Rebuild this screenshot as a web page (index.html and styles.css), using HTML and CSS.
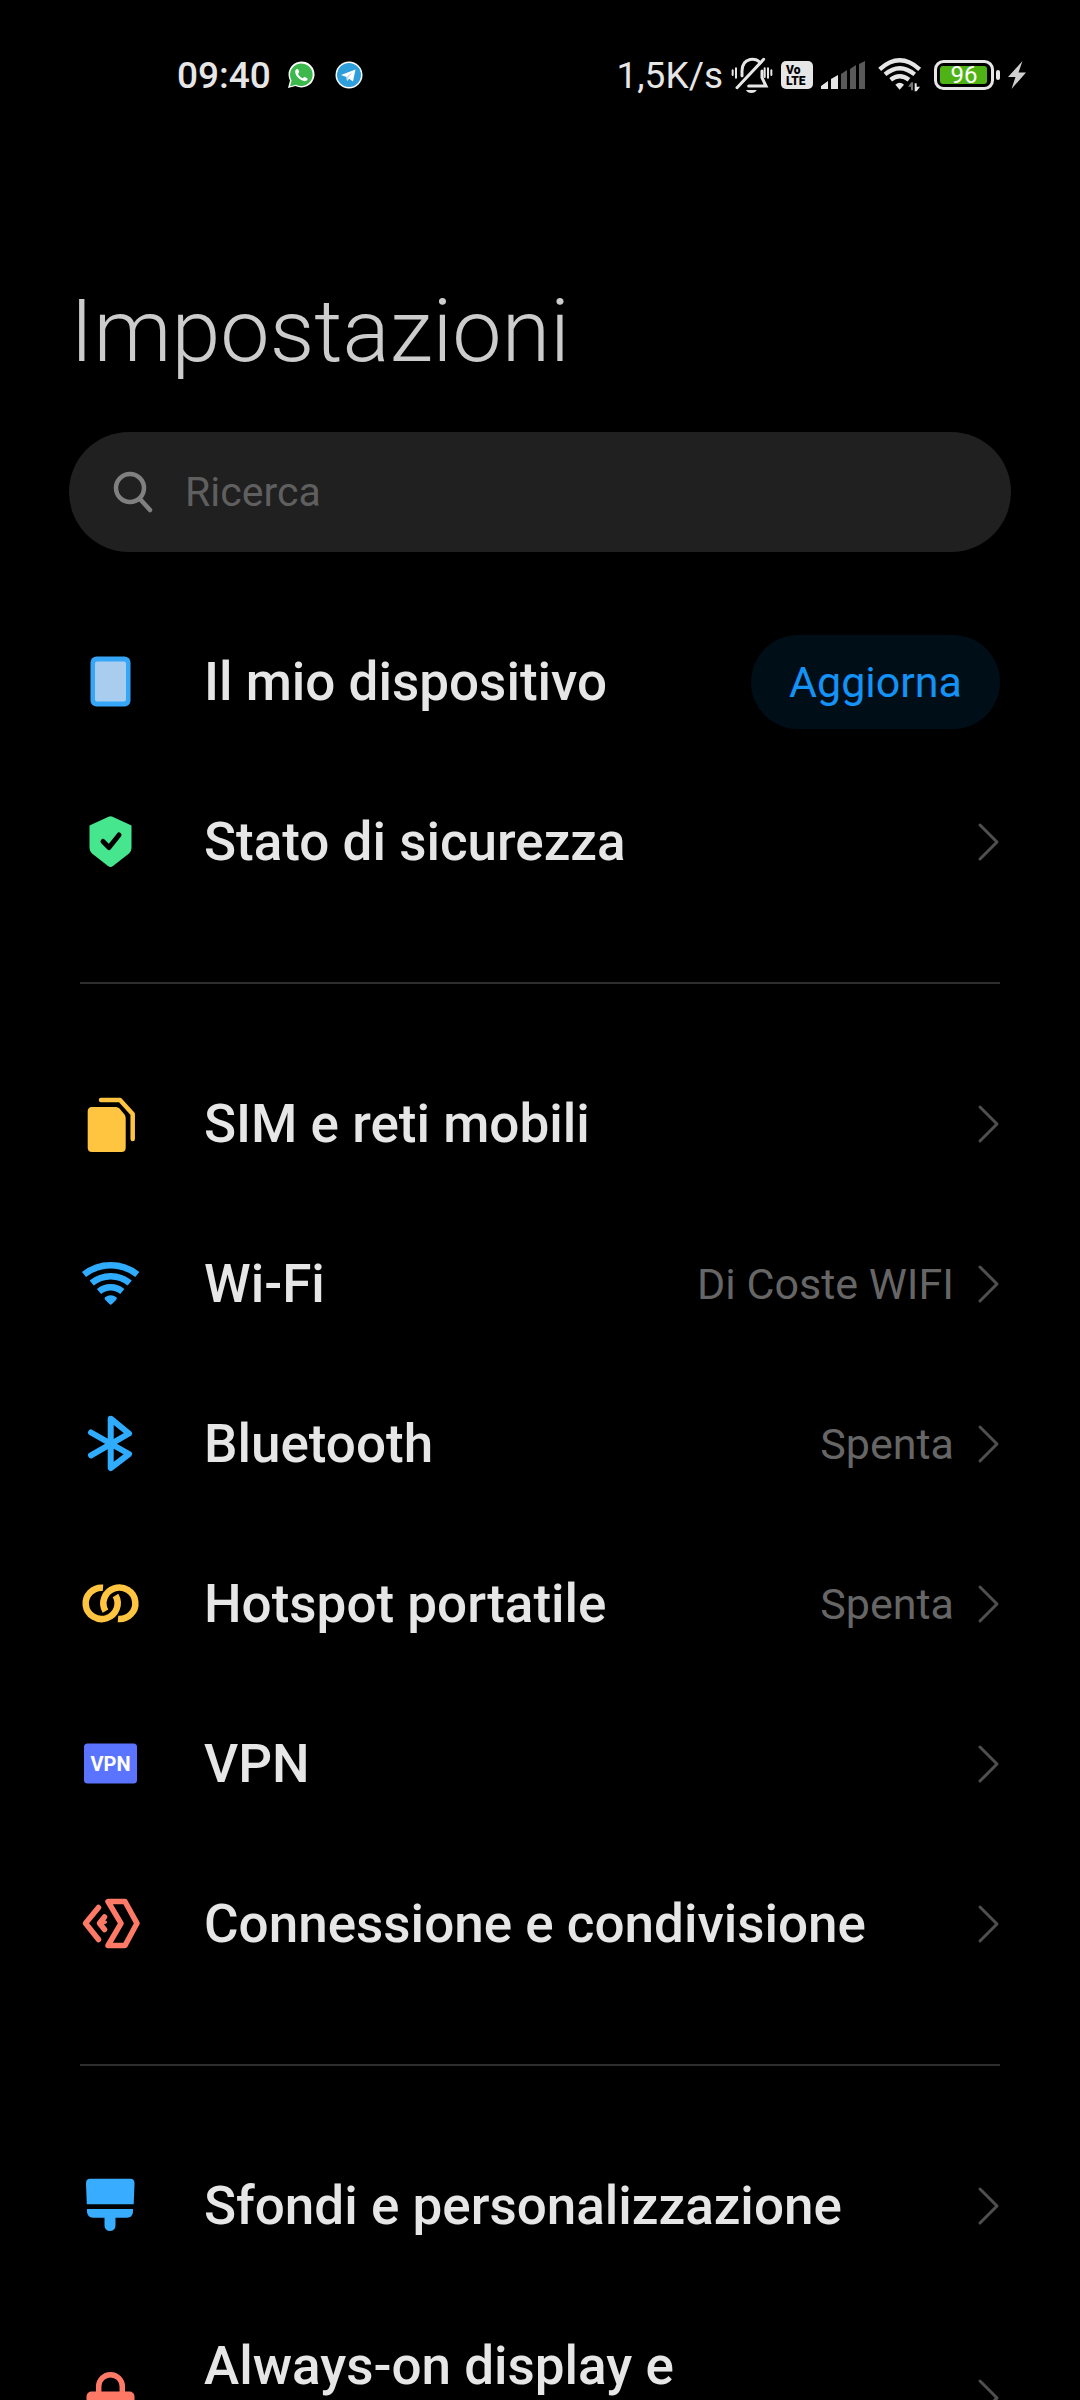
FILE: index.html
```html
<!DOCTYPE html>
<html lang="it">
<head>
<meta charset="UTF-8">
<meta name="viewport" content="width=device-width, initial-scale=1.0">
<title>Impostazioni</title>
<link rel="stylesheet" href="styles.css">
</head>
<body>
    <div class="status-bar">
        <div class="status-left">
            <span class="time">09:40</span>
            <svg class="app-icon" width="28" height="28" viewBox="0 0 28 28">
                <path d="M1 27 L3 19.5 A13 13 0 1 1 8.500 25 Z" fill="#fff"/>
                <path d="M3 25.300 L4.600 19.500 A11.300 11.300 0 1 1 9 23.700 Z" fill="#3cb84c"/>
                <path d="M9.500 8 C7 10 8.500 14 11 16.500 C14 19.500 18 21.500 20.500 19 L20.500 17.500 L17.500 15.800 L15.800 17.300 C13.500 16.500 12 15 11 12.800 L12.300 11 L11 8 Z" fill="#fff"/>
            </svg>
            <svg class="app-icon" width="28" height="28" viewBox="0 0 28 28">
                <circle cx="14" cy="14" r="13.500" fill="#fff"/>
                <circle cx="14" cy="14" r="12" fill="#2f9fdb"/>
                <path d="M6 14 L20.500 8.500 L18 20.500 L14.200 17.800 L12 20 L11.500 16 Z" fill="#fff"/>
                <path d="M11.500 16 L18 10.800 L13 16.800 L12 20 Z" fill="#b5d5e8"/>
            </svg>
        </div>
        <div class="status-right">
            <span class="speed">1,5K/s</span>
            <svg width="42" height="37" viewBox="361 50 126 111" fill="none" stroke="#e6e6e6" stroke-width="9" stroke-linecap="round">
                <path d="M394 106 V92 C394 50 440 50 448 68 M454 92 V112 L466 137 H414"/>
                <path d="M379 142 L459 57"/>
                <path d="M366 90 V104 M376 84 V112 M472 84 V112 M482 90 V104 M462 84 V110" stroke-width="6"/>
                <path d="M406 149 H438 Q434 158 422 158 Q410 158 406 149Z" fill="#e6e6e6" stroke="none"/>
            </svg>
            <svg class="volte" width="32" height="28" viewBox="0 0 32 28">
                <rect width="32" height="28" rx="5" fill="#e6e6e6"/>
                <text x="5" y="13">Vo</text>
                <text x="5" y="24">LTE</text>
            </svg>
            <svg class="signal" width="45" height="28" viewBox="0 0 45 28">
                <path d="M0 28 V25 L7 20 V28Z M10 28 V18 L17 14 V28Z" fill="#e6e6e6"/>
                <path d="M20 28 V13 L26 9 V28Z M29 28 V8 L35 4 V28Z M38 28 V3 L44 0 V28Z" fill="#595959"/>
            </svg>
            <svg class="wifi" width="44" height="34" viewBox="174 56 132 102" fill="none" stroke="#e6e6e6" stroke-width="13">
                <path d="M179 90 Q239 36 299 90"/>
                <path d="M195 105 Q239 68 284 105"/>
                <path d="M212 121 Q239 100 267 121"/>
                <path d="M226 136 Q239 125 252 136 L239 151Z" fill="#e6e6e6" stroke="none"/>
                <path d="M264 142 L274 129 H279 V153 H273 V142Z" fill="#777" stroke="none"/>
                <path d="M284 132 H290 V142 H300 L290 156 H284Z" fill="#e6e6e6" stroke="none"/>
            </svg>
            <svg class="battery" width="66" height="30" viewBox="0 0 66 30">
                <rect x="1.500" y="1.500" width="57" height="27" rx="8" fill="none" stroke="#e6e6e6" stroke-width="3"/>
                <rect x="6" y="6" width="47" height="18" rx="3" fill="#4fb315"/>
                <rect x="62" y="10" width="4" height="10" rx="2" fill="#e6e6e6"/>
                <text x="30" y="23" text-anchor="middle">96</text>
            </svg>
            <svg width="18" height="28" viewBox="0 0 18 28">
                <path d="M14.500 0 L0 16 H7.500 L3.500 28 L18 11.500 H10.500Z" fill="#cfcfcf"/>
            </svg>
        </div>
    </div>

    <h1>Impostazioni</h1>

    <label class="search">
        <svg width="40" height="42" viewBox="0 0 40 42" fill="none" stroke="#808080" stroke-width="4.500" stroke-linecap="round">
            <circle cx="17" cy="17" r="14"/>
            <path d="M27 28 L37 39"/>
        </svg>
        <input type="search" placeholder="Ricerca" aria-label="Ricerca">
    </label>

    <ul class="group">
        <li class="row">
            <svg class="icon" viewBox="0 0 60 60">
                <rect x="10.500" y="4.500" width="40" height="50" rx="6" fill="#36a6f9"/>
                <rect x="15" y="9.500" width="31" height="40" rx="2" fill="#a9cdee"/>
            </svg>
            <a class="label" href="#">Il mio dispositivo</a>
            <button class="update" type="button">Aggiorna</button>
        </li>
        <li>
            <a class="row" href="#">
                <svg class="icon" viewBox="0 0 60 60">
                    <path d="M28.500 4.700 Q30.500 3.600 32.500 4.700 L51.500 13.500 V36 Q51.500 39 49 41.500 L33 54 Q30.500 56 28 54 L12 41.500 Q9.500 39 9.500 36 V13.500Z" fill="#46e68f"/>
                    <path d="M23 29.500 L29 35.500 L39 23" fill="none" stroke="#000" stroke-width="5" stroke-linecap="round" stroke-linejoin="round"/>
                </svg>
                <span class="label">Stato di sicurezza</span>
                <svg class="chevron" viewBox="0 0 24 40"><path d="M4 3 L21 20 L4 37"/></svg>
            </a>
        </li>
    </ul>

    <ul class="group">
        <li>
            <a class="row" href="#">
                <svg class="icon" viewBox="0 0 60 60">
                    <path d="M12 13 H36 Q38 13 39.500 14.500 L44.500 20.500 Q45.700 22 45.700 24 V53.500 Q45.700 58 41.500 58 H12 Q7.700 58 7.700 53.500 V17.500 Q7.700 13 12 13Z" fill="#ffc440"/>
                    <path d="M21 6 H40 L52.700 20 V45" fill="none" stroke="#ffc440" stroke-width="4.500" stroke-linecap="round" stroke-linejoin="round"/>
                </svg>
                <span class="label">SIM e reti mobili</span>
                <svg class="chevron" viewBox="0 0 24 40"><path d="M4 3 L21 20 L4 37"/></svg>
            </a>
        </li>
        <li>
            <a class="row" href="#">
                <svg class="icon" viewBox="0 0 60 60" fill="none" stroke="#30acff" stroke-width="6.500">
                    <path d="M4 20.500 A43 43 0 0 1 57.300 20.500"/>
                    <path d="M11.700 29 A30 30 0 0 1 49.700 29"/>
                    <path d="M19 37.500 A18 18 0 0 1 42.300 37.500"/>
                    <path d="M24.700 43.500 Q30.700 39 36.700 43.500 Q37 45 36 46 L32 50 Q30.700 51.500 29.400 50 L25.400 46 Q24.400 45 24.700 43.500Z" fill="#30acff" stroke="none"/>
                </svg>
                <span class="label">Wi-Fi</span>
                <span class="value">Di Coste WIFI</span>
                <svg class="chevron" viewBox="0 0 24 40"><path d="M4 3 L21 20 L4 37"/></svg>
            </a>
        </li>
        <li>
            <a class="row" href="#">
                <svg class="icon" viewBox="0 0 60 60" fill="none" stroke="#30acff" stroke-width="6" stroke-linecap="round" stroke-linejoin="round">
                    <path d="M11 18.500 L49 40 L30.700 54 V4.700 L49 19.500 L11 41.300"/>
                </svg>
                <span class="label">Bluetooth</span>
                <span class="value">Spenta</span>
                <svg class="chevron" viewBox="0 0 24 40"><path d="M4 3 L21 20 L4 37"/></svg>
            </a>
        </li>
        <li>
            <a class="row" href="#">
                <svg class="icon" viewBox="0 0 60 60" fill="none" stroke="#ffc440" stroke-width="6.500">
                    <path d="M23 13.700 A16 15.700 0 1 0 35.500 21.500"/>
                    <path d="M38 45 A16 15.700 0 1 0 25.500 37.200"/>
                </svg>
                <span class="label">Hotspot portatile</span>
                <span class="value">Spenta</span>
                <svg class="chevron" viewBox="0 0 24 40"><path d="M4 3 L21 20 L4 37"/></svg>
            </a>
        </li>
        <li>
            <a class="row" href="#">
                <svg class="icon vpn" viewBox="0 0 60 60">
                    <rect x="4" y="9.500" width="53" height="40" rx="3.500" fill="#5b74ff"/>
                    <text x="30.500" y="37" text-anchor="middle">VPN</text>
                </svg>
                <span class="label">VPN</span>
                <svg class="chevron" viewBox="0 0 24 40"><path d="M4 3 L21 20 L4 37"/></svg>
            </a>
        </li>
        <li>
            <a class="row" href="#">
                <svg class="icon" viewBox="0 0 60 60" fill="none" stroke="#ff7a66" stroke-width="5.500" stroke-linecap="round" stroke-linejoin="round">
                    <path d="M28 7.500 H45 L57 29.300 L45 51.500 H28 L41 29.300Z"/>
                    <path d="M18.500 13.500 L5.500 29.300 L18.500 45.500"/>
                    <path d="M24.500 23 L19.500 29.300 L24.500 35.500"/>
                    <path d="M22 29.500 L25.500 28" stroke-width="3"/>
                </svg>
                <span class="label">Connessione e condivisione</span>
                <svg class="chevron" viewBox="0 0 24 40"><path d="M4 3 L21 20 L4 37"/></svg>
            </a>
        </li>
    </ul>

    <ul class="group">
        <li>
            <a class="row" href="#">
                <svg class="icon" viewBox="0 0 60 60" fill="#38acff">
                    <path d="M10 2.700 H50.500 Q54.700 2.700 54.500 8 L53.700 28.300 H6.800 L6 8 Q5.800 2.700 10 2.700Z"/>
                    <path d="M7 33 H53 V36 Q52.500 41.700 47 41.700 H35.500 V49.500 A5.500 5.500 0 0 1 24.500 49.500 V41.700 H13 Q7.500 41.700 7 36Z"/>
                </svg>
                <span class="label">Sfondi e personalizzazione</span>
                <svg class="chevron" viewBox="0 0 24 40"><path d="M4 3 L21 20 L4 37"/></svg>
            </a>
        </li>
        <li>
            <a class="row" href="#">
                <svg class="icon" viewBox="0 0 60 60">
                    <path d="M18.700 26 V18.500 A11.800 11.800 0 0 1 42.300 18.500 V26" fill="none" stroke="#ff7a66" stroke-width="5.500"/>
                    <rect x="6.500" y="23.500" width="48" height="34" rx="5" fill="#ff7a66"/>
                </svg>
                <span class="label">Always-on display e<br>schermata di blocco</span>
                <svg class="chevron" viewBox="0 0 24 40"><path d="M4 3 L21 20 L4 37"/></svg>
            </a>
        </li>
    </ul>
</body>
</html>
```
FILE: styles.css
```css
* {
    box-sizing: border-box;
}
body {
    margin: 0;
    height: 100vh;
    overflow: hidden;
    background-color: #000;
    color: #e6e6e6;
    font-family: Roboto, "Noto Sans", sans-serif;
}
a {
    color: inherit;
    text-decoration: none;
}

/* Barra di stato */
.status-bar {
    display: flex;
    justify-content: space-between;
    align-items: center;
    height: 150px;
    padding: 0 54px 0 177px;
    font-size: 37px;
    font-weight: 500;
}
.status-left,
.status-right {
    display: flex;
    align-items: center;
}
.status-left {
    gap: 20px;
}
.status-right {
    gap: 8px;
}
.time {
    margin-right: -4px;
}
.speed {
    font-weight: 400;
}
.volte text {
    font-size: 12px;
    font-weight: 900;
}
.wifi,
.battery {
    margin-left: 4px;
}
.battery text {
    font-size: 24px;
    font-weight: 400;
    fill: #fff;
}

/* Titolo e ricerca */
h1 {
    margin: 126px 70px 46px;
    color: #ccc;
    font-size: 88px;
    font-weight: 300;
    line-height: 110px;
}
.search {
    display: flex;
    align-items: center;
    gap: 32px;
    height: 120px;
    margin: 0 69px 50px;
    padding: 0 44px;
    border-radius: 60px;
    background-color: #202020;
}
.search input {
    flex: 1;
    min-width: 0;
    padding: 0;
    border: none;
    outline: none;
    background: none;
    color: #e6e6e6;
    font-family: inherit;
    font-size: 41px;
}
.search input::placeholder {
    color: #5f5f5f;
}

/* Elenco */
.group {
    margin: 0;
    padding: 0 80px;
    list-style: none;
}
.group + .group::before {
    content: "";
    display: block;
    height: 2px;
    margin: 60px 0;
    background-color: #2e2e2e;
}
.row {
    display: flex;
    align-items: center;
    min-height: 160px;
    padding: 48px 0;
}
.icon {
    flex: none;
    width: 60px;
    height: 60px;
    margin-right: 64px;
}
.vpn text {
    font-size: 20px;
    font-weight: 700;
    fill: #fff;
}
.label {
    flex: 1;
    font-size: 53px;
    font-weight: 500;
    line-height: 64px;
}
.value {
    color: #666;
    font-size: 43px;
}
.chevron {
    flex: none;
    width: 24px;
    height: 40px;
    margin-left: 22px;
    fill: none;
    stroke: #4f4f4f;
    stroke-width: 3;
    stroke-linecap: round;
    stroke-linejoin: round;
}
.update {
    height: 94px;
    margin: -15px 0;
    padding: 0 38px;
    border: none;
    border-radius: 47px;
    background-color: #000e18;
    color: #1492f5;
    font-family: inherit;
    font-size: 43px;
}
```
